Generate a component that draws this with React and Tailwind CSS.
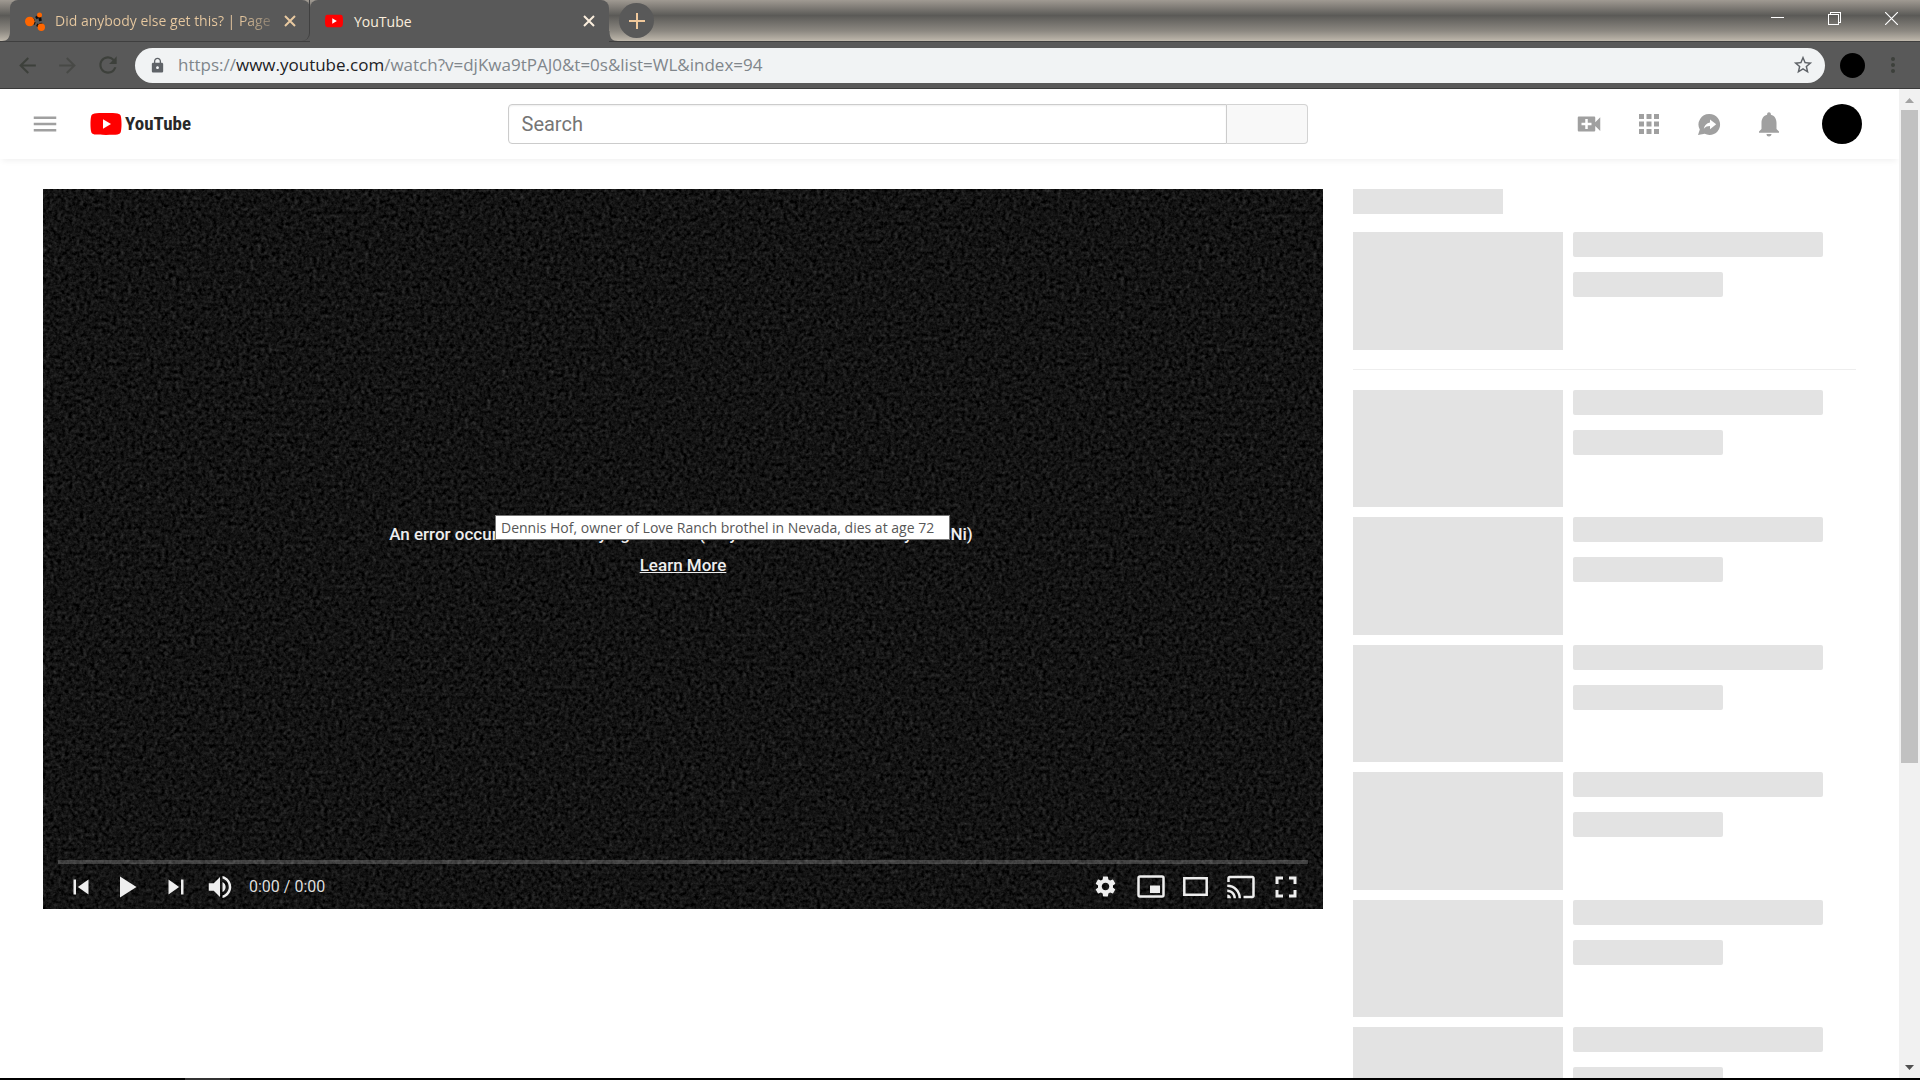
import React from 'react';
import { MdVideoCall, MdApps, MdMenu, MdNotifications, MdStarBorder, MdSkipPrevious, MdSkipNext, MdPlayArrow, MdVolumeUp, MdSettings, MdCast, MdFullscreen, MdLock, MdArrowBack, MdArrowForward, MdRefresh } from 'react-icons/md';

const relatedItems = [1, 2, 3, 4, 5, 6];

function PlayBadge({ className }) {
  return (
    <svg viewBox="0 0 31 22" className={className} aria-hidden="true">
      <path fill="#f00" d="M4 .4C8-.1 23-.1 27 .4c2 .3 3.200 1.400 3.500 3.500.7 4 .7 10.200 0 14.200-.3 2.100-1.500 3.200-3.500 3.500-4 .5-19 .5-23 0-2-.3-3.200-1.400-3.500-3.500-.7-4-.7-10.200 0-14.200C.8 1.800 2 .7 4 .4z" />
      <path fill="#fff" d="M12.500 6.300v9.400l8-4.700z" />
    </svg>
  );
}

function CloseIcon() {
  return (
    <svg viewBox="0 0 12 12" className="h-3 w-3">
      <path d="m1 1 10 10M11 1 1 11" stroke="currentColor" strokeWidth="2" />
    </svg>
  );
}

function TabStrip() {
  return (
    <div className="flex h-[42px] shrink-0 items-stretch border-b border-[#3f3f3f] bg-[linear-gradient(#a09a92_0%,#5b5a57_38%,#8b8780_75%,#bfb8ac_100%)]">
      <svg viewBox="0 0 10 10" className="h-[10px] w-[10px] self-end" aria-hidden="true">
        <path d="M10 0v10H2c5 0 8-3 8-10z" fill="#595959" />
      </svg>
      <div className="flex w-[300px] rounded-t-lg bg-[#595959]">
        <div className="flex w-full items-center rounded-br-lg border-r border-[#404040] pl-[15px]">
          <svg viewBox="0 0 20 20" className="h-5 w-5 shrink-0" aria-hidden="true">
            <path d="M6 10.500 14.500 4.500l2 12z" fill="none" stroke="#0c0c0c" strokeWidth="2.800" strokeDasharray="4 2" />
            <circle cx="4.800" cy="10.500" r="4.800" fill="#f60" />
            <circle cx="14.500" cy="4" r="2.500" fill="#f60" />
            <circle cx="16.300" cy="16.300" r="3.700" fill="#f60" />
          </svg>
          <span className="ml-[10px] grow whitespace-nowrap bg-[linear-gradient(90deg,#e8c9a0_82%,#6a6660)] bg-clip-text text-[14px] text-transparent">
            Did anybody else get this? | Page
          </span>
          <button aria-label="Close tab" className="mr-[9px] p-1 text-[#e8c9a0]"><CloseIcon /></button>
        </div>
      </div>
      <div className="-mb-px flex w-[299px] items-center rounded-t-lg bg-[#595959] pl-[15px]">
        <PlayBadge className="h-[14px] w-[18px]" />
        <span className="ml-[11px] grow text-[14px] text-[#fbeedd]">YouTube</span>
        <button aria-label="Close tab" className="mr-[10px] p-1 text-[#fbeedd]"><CloseIcon /></button>
      </div>
      <svg viewBox="0 0 10 10" className="h-[10px] w-[10px] self-end" aria-hidden="true">
        <path d="M0 0v10h9C3 10 .5 7 .5 0z" fill="#595959" />
      </svg>
      <button aria-label="New tab" className="flex h-[35px] w-[35px] items-center justify-center self-center rounded-full bg-[#595959] text-[#f0c89b]">
        <svg viewBox="0 0 16 16" className="h-4 w-4"><path d="M8 0v16M0 8h16" stroke="currentColor" strokeWidth="2" /></svg>
      </button>
      <div className="ml-auto flex pb-[5px] text-white">
        <button aria-label="Minimize" className="flex w-[56px] items-center justify-center">
          <svg viewBox="0 0 13 13" className="h-[13px] w-[13px]" shapeRendering="crispEdges"><path d="M0 5.500h13" stroke="currentColor" /></svg>
        </button>
        <button aria-label="Restore" className="flex w-[58px] items-center justify-center">
          <svg viewBox="0 0 13 13" className="h-[13px] w-[13px]" shapeRendering="crispEdges"><path d="M.5 2.500h10v10H.5zM2.500 2.500v-2h10v10h-2" fill="none" stroke="currentColor" /></svg>
        </button>
        <button aria-label="Close" className="flex w-[57px] items-center justify-center">
          <svg viewBox="0 0 13 13" className="h-[13px] w-[13px]"><path d="m0 0 13 13M13 0 0 13" stroke="currentColor" strokeWidth="1.200" /></svg>
        </button>
      </div>
    </div>
  );
}

function AddressBar() {
  return (
    <div className="flex h-[47px] shrink-0 items-center border-b border-[#3a3a3a] bg-[#595959] pl-[15px] text-[#3d403b]">
      <button aria-label="Back" className="w-[40px]"><MdArrowBack size={25} /></button>
      <button aria-label="Forward" className="w-[40px] opacity-60"><MdArrowForward size={25} /></button>
      <button aria-label="Reload" className="w-[40px]"><MdRefresh size={26} /></button>
      <div className="flex h-[35px] grow items-center rounded-full bg-[#f1f3f4] pl-[14px] pr-[11px] text-[#5f6368]">
        <MdLock size={17} />
        <div className="ml-3 grow whitespace-nowrap text-[17px] text-[#80868b]">
          <span>https://</span><span className="text-[#202124]">www.youtube.com</span>/watch?v=djKwa9tPAJ0&amp;t=0s&amp;list=WL&amp;index=94
        </div>
        <button aria-label="Bookmark this page"><MdStarBorder size={22} /></button>
      </div>
      <button aria-label="Profile" className="ml-[15px] h-[25px] w-[25px] rounded-full bg-black" />
      <button aria-label="Menu" className="mx-[20px] flex w-[15px] flex-col items-center gap-[2px]">
        <span className="h-1 w-1 rounded-full bg-current" />
        <span className="h-1 w-1 rounded-full bg-current" />
        <span className="h-1 w-1 rounded-full bg-current" />
      </button>
    </div>
  );
}

function Masthead() {
  return (
    <header className="flex h-[70px] shrink-0 items-center bg-white pl-[30px] pr-[37px] font-[Roboto,sans-serif] text-[#a0a0a0] shadow-[0_4px_6px_-2px_rgba(0,0,0,0.06)]">
      <div className="flex w-[211px] items-center gap-[30px]">
        <button aria-label="Guide"><MdMenu size={30} /></button>
        <a href="#home" className="flex items-center gap-[3px] text-[#282828]">
          <PlayBadge className="h-[22px] w-[32px]" />
          <span className="font-['Liberation_Sans_Narrow','Roboto_Condensed',Roboto,sans-serif] text-[19px] font-bold">YouTube</span>
        </a>
      </div>
      <form className="mx-auto flex h-[40px] w-[800px]">
        <input aria-label="Search" placeholder="Search" className="min-w-0 grow rounded-l-sm border border-[#ccc] px-[13px] text-[20px] text-[#111] shadow-[inset_0_1px_2px_#eee] placeholder:text-[#757575]" />
        <button type="button" aria-label="Submit search" className="w-[81px] rounded-r-sm border border-l-0 border-[#d3d3d3] bg-[#f8f8f8]" />
      </form>
      <div className="flex items-center gap-[30px]">
        <button aria-label="Create"><MdVideoCall size={30} /></button>
        <button aria-label="Apps"><MdApps size={30} /></button>
        <button aria-label="Messages">
          <svg viewBox="0 0 30 30" className="h-[30px] w-[30px]">
            <path fill="currentColor" d="M15.500 5a10.500 10.500 0 1 1-4.800 19.800L4 26l1.800-5.500A10.500 10.500 0 0 1 15.500 5z" />
            <path fill="#fff" d="M16 10.500v3c-3.600.7-5.600 3-6.200 6.300 1.700-2 3.600-2.700 6.200-2.700v3.100l6.200-4.900z" />
          </svg>
        </button>
        <button aria-label="Notifications"><MdNotifications size={30} /></button>
        <button aria-label="Account" className="ml-2 h-[40px] w-[40px] rounded-full bg-black" />
      </div>
    </header>
  );
}

function Controls() {
  return (
    <div className="relative flex h-[45px] items-center px-[15px]">
      <button aria-label="Previous" className="flex w-[45px] justify-center"><MdSkipPrevious size={30} /></button>
      <button aria-label="Play" className="w-[50px] pl-[5px]"><MdPlayArrow size={36} /></button>
      <button aria-label="Next" className="flex w-[45px] justify-center"><MdSkipNext size={30} /></button>
      <button aria-label="Mute" className="flex w-[43px] justify-center"><MdVolumeUp size={30} /></button>
      <span className="ml-2 text-[16px] text-[#ddd]">0:00 / 0:00</span>
      <div className="ml-auto flex items-center">
        <button aria-label="Settings" className="flex w-[45px] justify-center"><MdSettings size={25} /></button>
        <button aria-label="Miniplayer" className="flex w-[45px] justify-center">
          <svg viewBox="0 0 28 23" className="h-[23px] w-[28px]">
            <rect x="1.500" y="1.500" width="25" height="20" rx="1.500" fill="none" stroke="currentColor" strokeWidth="2.500" />
            <path d="M13 10.500h10v7.500H13z" fill="currentColor" />
          </svg>
        </button>
        <button aria-label="Theater mode" className="flex w-[45px] justify-center">
          <svg viewBox="0 0 25 19" className="h-[19px] w-[25px]">
            <path d="M1.300 1.300h22.400v16.400H1.300z" fill="none" stroke="currentColor" strokeWidth="2.500" />
          </svg>
        </button>
        <button aria-label="Cast" className="flex w-[45px] justify-center"><MdCast size={30} /></button>
        <button aria-label="Full screen" className="flex w-[45px] justify-center"><MdFullscreen size={36} /></button>
      </div>
    </div>
  );
}

function Player() {
  return (
    <div className="relative flex aspect-video grow flex-col bg-[#121212] font-[Roboto,sans-serif] text-[#eee]">
      {/* TV static */}
      <svg className="absolute inset-0 h-full w-full" aria-hidden="true">
        <filter id="static" x="0" y="0" width="100%" height="100%" colorInterpolationFilters="sRGB">
          <feTurbulence type="fractalNoise" baseFrequency="0.27" numOctaves="3" seed="4" />
          <feColorMatrix values="0.200 0.200 0 0 -0.125  0.200 0.200 0 0 -0.125  0.200 0.200 0 0 -0.125  0 0 0 0 1" />
        </filter>
        <rect width="100%" height="100%" filter="url(#static)" />
      </svg>
      <div className="relative flex grow flex-col items-center justify-center gap-[5px] pt-[49px] text-[17px] leading-[26px] font-medium">
        <p className="pr-1">An error occurred. Please try again later. (Playback ID: Z4mRvHnKWyuT8sNi)</p>
        <a href="#help" className="underline">Learn More</a>
      </div>
      <div className="relative mx-[15px] h-1 bg-white/20" />
      <Controls />
    </div>
  );
}

function RelatedItem() {
  return (
    <div className="flex gap-[10px]">
      <div className="aspect-[168/94] w-[210px] bg-[#e3e3e3]" />
      <div>
        <div className="h-[25px] w-[250px] rounded-xs bg-[#e3e3e3]" />
        <div className="mt-[15px] h-[25px] w-[150px] rounded-xs bg-[#e3e3e3]" />
      </div>
    </div>
  );
}

function Scrollbar() {
  return (
    <div className="flex w-[21px] shrink-0 flex-col items-center bg-[#f1f1f1]">
      <svg viewBox="0 0 21 21" className="h-[21px] w-[21px] shrink-0" aria-hidden="true"><path d="M6 14h9l-4.500-5z" fill="#a3a3a3" /></svg>
      <div className="h-[66%] w-[17px] bg-[#c1c1c1]" />
      <svg viewBox="0 0 21 21" className="mt-auto h-[21px] w-[21px] shrink-0" aria-hidden="true"><path d="M6 8h9l-4.500 5z" fill="#505050" /></svg>
    </div>
  );
}

export default function App() {
  return (
    <div className="flex h-screen flex-col overflow-hidden bg-white font-['Open_Sans',sans-serif]">
      <TabStrip />
      <AddressBar />
      <div className="flex min-h-0 grow">
        <div className="flex min-w-0 grow flex-col">
          <Masthead />
          <main className="flex min-h-0 grow items-start gap-[30px] overflow-hidden px-[43px] pt-[30px]">
            <Player />
            <aside className="w-[503px] shrink-0">
              <div className="mb-[18px] h-[25px] w-[150px] bg-[#e3e3e3]" />
              <RelatedItem />
              <hr className="mt-[19px] mb-5 border-[#eee]" />
              <div className="flex flex-col gap-[10px]">
                {relatedItems.map((id) => <RelatedItem key={id} />)}
              </div>
            </aside>
          </main>
        </div>
        <Scrollbar />
      </div>
      <div className="h-[2px] shrink-0 bg-black pl-[185px]">
        <div className="h-full w-[45px] bg-[#333]" />
      </div>
      <div role="tooltip" className="absolute left-[495px] top-[515px] h-[25px] w-[455px] border border-[#767676] bg-white px-[5px] text-[14px] leading-[23px] text-[#575757]">
        Dennis Hof, owner of Love Ranch brothel in Nevada, dies at age 72
      </div>
    </div>
  );
}
